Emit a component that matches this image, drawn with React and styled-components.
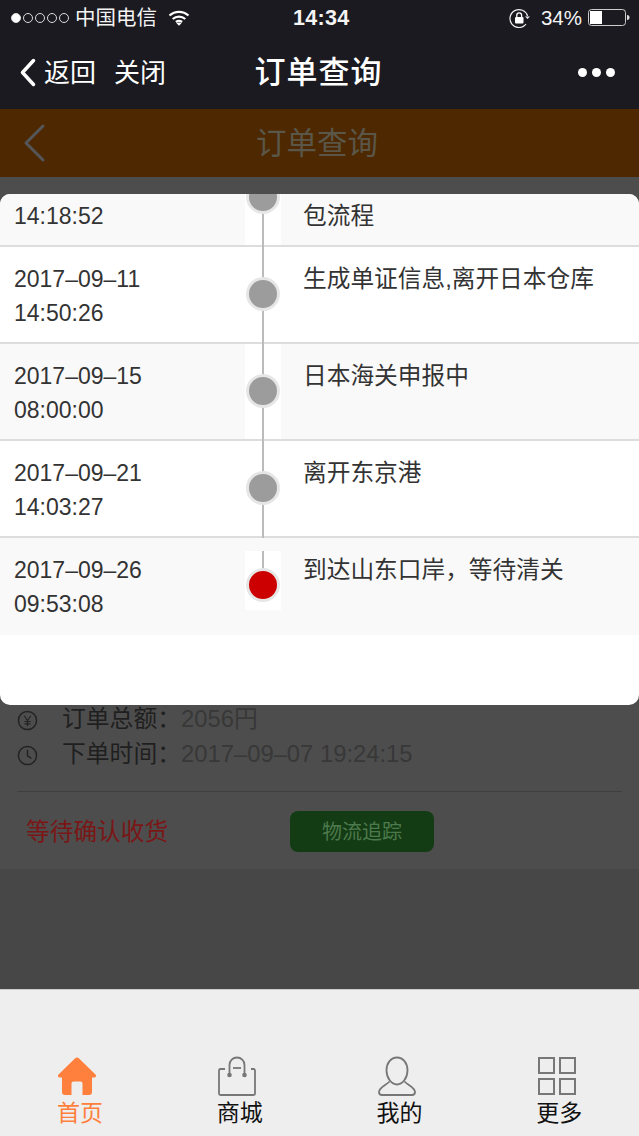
import React from 'react';
import styled, { createGlobalStyle } from 'styled-components';

const Global = createGlobalStyle`
  html, body { margin: 0; padding: 0; background: #1a1a20; }
  * { box-sizing: border-box; }
  body { font-family: "Liberation Sans", "Noto Sans CJK SC", sans-serif; }
`;

const Page = styled.div`
  position: relative;
  width: 639px;
  height: 1136px;
  overflow: hidden;
  display: flex;
  flex-direction: column;
  background: #474747;
`;
const Chrome = styled.header`
  background: #1a1a20;
  height: 109px;
  color: #fff;
  flex: none;
`;
const StatusBar = styled.div`
  height: 36px;
  display: flex;
  align-items: center;
  padding: 0 9px 0 11px;
  font-size: 20.5px;
  color: #f4f4f4;
`;
const Signal = styled.div`
  display: flex;
  gap: 2px;
  margin-right: 6px;
`;
const SignalDot = styled.span`
  width: 10px;
  height: 10px;
  border-radius: 50%;
  border: 1px solid #ddd;
  background: ${p => (p.$on ? '#fff' : 'transparent')};
`;
const Carrier = styled.span`
  width: 93px;
  line-height: 1;
`;
const Clock = styled.span`
  position: absolute;
  left: 293px;
  top: 7px;
  font-weight: 700;
  font-size: 21.5px;
  letter-spacing: 0.3px;
  line-height: 22px;
`;
const StatusRight = styled.div`
  margin-left: auto;
  display: flex;
  align-items: center;
`;
const Percent = styled.span`
  font-size: 20.5px;
  margin: 0 6px 0 11px;
`;
const NavBar = styled.div`
  height: 73px;
  display: flex;
  align-items: center;
  padding: 0 24px 1px 19px;
  position: relative;
`;
const NavLink = styled.span`
  font-size: 26px;
  line-height: 1;
  margin-left: ${p => p.$gap}px;
  margin-top: 2px;
`;
const NavTitle = styled.span`
  position: absolute;
  left: 0;
  right: 2px;
  text-align: center;
  font-size: 31px;
  font-weight: 500;
  letter-spacing: 1px;
  line-height: 1;
  top: 21px;
  pointer-events: none;
`;
const More = styled.div`
  margin-left: auto;
  display: flex;
  gap: 5px;
`;
const MoreDot = styled.span`
  width: 9px;
  height: 9px;
  border-radius: 50%;
  background: #fff;
`;
const OrangeBar = styled.div`
  flex: none;
  height: 68px;
  background: #4d2800;
  position: relative;
  display: flex;
  align-items: center;
  padding-left: 23px;
`;
const OrangeTitle = styled.span`
  position: absolute;
  left: 0;
  right: 5px;
  text-align: center;
  font-size: 30.5px;
  line-height: 1;
  color: #5a5648;
  top: 19px;
`;
const OrderCard = styled.section`
  flex: none;
  height: 692px;
  background: #4d4d4d;
  padding: 524px 17px 0;
`;
const InfoRow = styled.div`
  display: flex;
  align-items: center;
  height: 35px;
  font-size: 23.8px;
  line-height: 1;
`;
const InfoIcon = styled.svg`
  width: 21px;
  height: 21px;
  margin-right: 24px;
  flex: none;
  margin-top: 4px;
`;
const InfoLabel = styled.span`
  color: #1f1f1f;
`;
const InfoValue = styled.span`
  color: #383838;
`;
const Divider = styled.div`
  margin: 20px 0 0;
  height: 1px;
  background: #3f3f3f;
`;
const ActionRow = styled.div`
  display: flex;
  align-items: center;
  margin-top: 19px;
  padding-left: 9px;
`;
const StatusText = styled.span`
  font-size: 23.7px;
  color: #7a1616;
  width: 264px;
  line-height: 1;
  margin-top: 2px;
`;
const TrackButton = styled.span`
  width: 144px;
  height: 41px;
  border-radius: 8px;
  background: #143c14;
  color: #4c7a4c;
  font-size: 20px;
  padding-bottom: 3px;
  display: flex;
  align-items: center;
  justify-content: center;
`;
const Filler = styled.div`
  flex: 1;
`;
const TabBar = styled.nav`
  flex: none;
  height: 147px;
  background: #eee;
  border-top: 1px solid #ccc;
  display: grid;
  grid-template-columns: repeat(4, 1fr);
  padding-top: 66px;
`;
const Tab = styled.div`
  display: flex;
  flex-direction: column;
  align-items: center;
  color: ${p => (p.$active ? '#ff7f3c' : '#111')};
  font-size: 23px;
  line-height: 1;
`;
const TabIcon = styled.svg`
  width: 40px;
  height: 40px;
  margin-right: 5px;
  margin-bottom: 6px;
  display: block;
`;
const Modal = styled.div`
  position: absolute;
  left: 0;
  top: 194px;
  width: 639px;
  height: 511px;
  background: #fff;
  border-radius: 10px;
  overflow: hidden;
`;
const Row = styled.div`
  display: flex;
  height: ${p => (p.$clip ? '53px' : '97px')};
  background: ${p => (p.$shade ? '#f9f9f9' : '#fff')};
  border-bottom: ${p => (p.$last ? 'none' : '2px solid #ddd')};
`;
const Time = styled.div`
  width: 245px;
  padding: ${p => (p.$clip ? '5px' : '15px')} 0 0 14px;
  font-size: 23px;
  line-height: 34px;
  color: #333;
`;
const TimeLine = styled.div`
  white-space: pre;
  height: 34px;
`;
const Axis = styled.div`
  width: 36px;
  flex: none;
  background: #fff;
  position: relative;
  display: flex;
  align-items: ${p => (p.$clip ? 'flex-start' : 'center')};
  justify-content: center;
  height: ${p => (p.$last ? '59px' : '100%')};
  margin-top: ${p => (p.$last ? '13px' : '0')};
  &::before {
    content: '';
    position: absolute;
    left: 17px;
    top: 0;
    width: 2px;
    height: ${p => (p.$last ? '50%' : 'calc(100% + 2px)')};
    background: #bbb;
  }
`;
const Dot = styled.span`
  position: relative;
  flex: none;
  width: 34px;
  height: 34px;
  border-radius: 50%;
  border: 3px solid #e6e6e6;
  background: ${p => (p.$current ? '#cc0000' : '#9c9c9c')};
  margin-top: ${p => (p.$clip ? '-14px' : p.$last ? '8px' : '-1px')};
`;
const Desc = styled.div`
  padding: ${p => (p.$clip ? '5px' : '15px')} 0 0 22px;
  font-size: 23.7px;
  line-height: 34px;
  color: #333;
  white-space: pre;
`;

const rows = [
  { b: '14:18:52', text: '包流程', shade: true, clip: true },
  { a: '2017–09–11', b: '14:50:26', text: '生成单证信息,离开日本仓库' },
  { a: '2017–09–15', b: '08:00:00', text: '日本海关申报中', shade: true },
  { a: '2017–09–21', b: '14:03:27', text: '离开东京港' },
  { a: '2017–09–26', b: '09:53:08', text: '到达山东口岸，等待清关', shade: true, last: true },
];

const Back = ({ w, h, c, s }) => (
  <svg width={w} height={h} viewBox={`0 0 ${w} ${h}`} fill="none">
    <path d={`M${w - s} ${s}L${s} ${h / 2}L${w - s} ${h - s}`} stroke={c} strokeWidth={s} strokeLinecap="round" strokeLinejoin="round" />
  </svg>
);

export default function App() {
  return (
    <Page>
      <Global />
      <Chrome>
        <StatusBar>
          <Signal>
            <SignalDot $on />
            <SignalDot />
            <SignalDot />
            <SignalDot />
            <SignalDot />
          </Signal>
          <Carrier>中国电信</Carrier>
          <svg width="22" height="16" viewBox="0 0 21 16" fill="none" stroke="#fff" strokeWidth="2.2">
            <path d="M1 5.5C6.5.6 14.5.6 20 5.5" />
            <path d="M4.2 9C7.8 5.9 13.2 5.9 16.8 9" />
            <path d="M7.4 12C9.2 10.7 11.8 10.7 13.6 12" />
            <path d="M10.5 15.8L8 13.2C9.5 12.3 11.5 12.3 13 13.2Z" fill="#fff" stroke="none" />
          </svg>
          <Clock>14:34</Clock>
          <StatusRight>
            <svg width="21" height="20" viewBox="0 0 21 20" fill="none">
              <path d="M18.6 8A9 9 0 1 0 17 16.2" stroke="#eee" strokeWidth="1.2" />
              <path d="M16 8.500h5l-2.500 2.500Z" fill="#eee" />
              <rect x="6" y="9" width="8.500" height="6.500" rx="1" fill="#fff" />
              <path d="M7.800 9V7.200a2.400 2.400 0 0 1 4.800 0V9" stroke="#fff" strokeWidth="1.300" />
            </svg>
            <Percent>34%</Percent>
            <svg width="42" height="18" viewBox="0 0 42 18" fill="none">
              <rect x=".5" y=".5" width="37" height="16" rx="3" stroke="#ccc" />
              <rect x="2" y="2" width="12" height="13" fill="#fff" />
              <path d="M39 6c1.800 0 2.500 1 2.500 2.500S40.800 11 39 11Z" fill="#ddd" />
            </svg>
          </StatusRight>
        </StatusBar>
        <NavBar>
          <Back w={18} h={31} c="#fff" s={3.5} />
          <NavLink $gap={7}>返回</NavLink>
          <NavLink $gap={18}>关闭</NavLink>
          <NavTitle>订单查询</NavTitle>
          <More>
            <MoreDot />
            <MoreDot />
            <MoreDot />
          </More>
        </NavBar>
      </Chrome>
      <OrangeBar>
        <Back w={23} h={40} c="#55565a" s={3} />
        <OrangeTitle>订单查询</OrangeTitle>
      </OrangeBar>
      <OrderCard>
        <InfoRow>
          <InfoIcon viewBox="0 0 22 22" fill="none" stroke="#222" strokeWidth="1.500">
            <circle cx="11" cy="11" r="9.500" />
            <path d="M7.500 6l3.500 5 3.500-5M11 11v6M7.800 12h6.400M7.800 14.500h6.400" strokeWidth="1.200" />
          </InfoIcon>
          <InfoLabel>订单总额：</InfoLabel>
          <InfoValue>2056円</InfoValue>
        </InfoRow>
        <InfoRow>
          <InfoIcon viewBox="0 0 22 22" fill="none" stroke="#222" strokeWidth="1.500">
            <circle cx="11" cy="11" r="9.500" />
            <path d="M11 5v6.500l4 2.500" />
          </InfoIcon>
          <InfoLabel>下单时间：</InfoLabel>
          <InfoValue>2017–09–07 19:24:15</InfoValue>
        </InfoRow>
        <Divider />
        <ActionRow>
          <StatusText>等待确认收货</StatusText>
          <TrackButton>物流追踪</TrackButton>
        </ActionRow>
      </OrderCard>
      <Filler />
      <TabBar>
        <Tab $active>
          <TabIcon viewBox="0 0 40 40">
            <path d="M20 1.500a2.500 2.500 0 0 1 1.800.8L38.500 18.500c1.200 1.300.4 3-1.300 3H35V36a3 3 0 0 1-3 3h-6.500V27.500a2 2 0 0 0-2-2h-7a2 2 0 0 0-2 2V39H8a3 3 0 0 1-3-3V21.500H2.800c-1.700 0-2.500-1.700-1.300-3L18.200 2.300a2.500 2.500 0 0 1 1.800-.8Z" fill="#ff7f3c" />
          </TabIcon>
          首页
        </Tab>
        <Tab>
          <TabIcon viewBox="0 0 40 40" fill="none" stroke="#777" strokeWidth="1.800">
            <path d="M8 13H3.500a1.500 1.500 0 0 0-1.500 1.500V37.500A1.500 1.500 0 0 0 3.500 39h33a1.500 1.500 0 0 0 1.500-1.500V14.500a1.500 1.500 0 0 0-1.500-1.500H34" />
            <path d="M12.500 19V9a7.500 7.500 0 0 1 15 0v10" />
            <path d="M16 12h8" />
            <circle cx="12.500" cy="19" r="1.400" fill="#777" />
            <circle cx="27.500" cy="19" r="1.400" fill="#777" />
          </TabIcon>
          商城
        </Tab>
        <Tab>
          <TabIcon viewBox="0 0 40 40" fill="none" stroke="#777" strokeWidth="1.800">
            <path d="M20 1.500c6 0 10.500 5.500 10.500 13S25.500 28.500 20 28.500 9.500 22 9.500 14.500 14 1.500 20 1.500Z" />
            <path d="M12.500 25.500C9.500 29 2 31 2 36c0 2 1 3 3 3h30c2 0 3-1 3-3 0-5-7.500-7-10.500-10.500" />
          </TabIcon>
          我的
        </Tab>
        <Tab>
          <TabIcon viewBox="0 0 40 40" fill="none" stroke="#777" strokeWidth="2">
            <rect x="2" y="2" width="15" height="15" />
            <rect x="23" y="2" width="15" height="15" />
            <rect x="2" y="23" width="15" height="15" />
            <rect x="23" y="23" width="15" height="15" />
          </TabIcon>
          更多
        </Tab>
      </TabBar>
      <Modal>
        {rows.map((r, i) => (
          <Row key={i} $shade={r.shade} $last={r.last} $clip={r.clip}>
            <Time $clip={r.clip}>
              {r.a && <TimeLine>{r.a}</TimeLine>}
              <TimeLine>{r.b}</TimeLine>
            </Time>
            <Axis $last={r.last} $clip={r.clip}>
              <Dot $current={r.last} $last={r.last} $clip={r.clip} />
            </Axis>
            <Desc $clip={r.clip}>{r.text}</Desc>
          </Row>
        ))}
      </Modal>
    </Page>
  );
}
